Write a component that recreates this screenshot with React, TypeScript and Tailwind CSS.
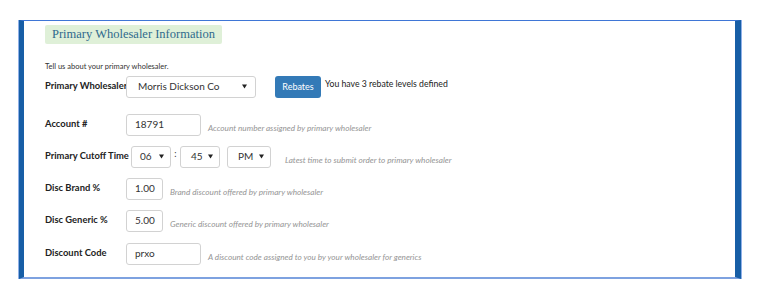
import React from "react";

const Caret = () => (
  <svg width="5" height="5" viewBox="0 0 5 5" className="shrink-0">
    <path d="M0 0.5 L5 0.5 L2.5 4.5 Z" fill="#222" />
  </svg>
);

function FakeSelect({ value, w, pl = "pl-[11px]", pr = "pr-[8px]" }: { value: string; w: string; pl?: string; pr?: string }) {
  return (
    <div className={`${w} shrink-0 h-[22px] flex items-center justify-between ${pl} ${pr} border border-[#d2d2d2] rounded-[3px] bg-white text-[10px] text-[#333]`}>
      <span>{value}</span>
      <Caret />
    </div>
  );
}

function Input({ value, w }: { value: string; w: string }) {
  return (
    <div className={`${w} shrink-0 h-[22px] flex items-center pl-[8px] border border-[#d2d2d2] rounded-[3px] bg-white text-[10px] text-[#333]`}>
      {value}
    </div>
  );
}

function Help({ children }: { children: React.ReactNode }) {
  return <span className="text-[8.2px] italic text-[#959595]">{children}</span>;
}

function Label({ children }: { children: React.ReactNode }) {
  return <span className="w-[81px] shrink-0 whitespace-nowrap font-bold text-[9.4px] text-[#222]">{children}</span>;
}

export default function App() {
  return (
    <div className="w-[760px] h-[300px] bg-white pt-[20px] pl-[19px]" style={{ fontFamily: "Lato, 'Liberation Sans', sans-serif" }}>
      <div className="w-[722px] h-[259px] border-t border-t-[#3f76d6] border-b-2 border-b-[#7ea2e0] border-l-[5px] border-l-[#175ea6] border-r-[6px] border-r-[#175ea6] pl-[21px] pt-[4px] shadow-[-1px_0_0_#8fb0e8,1px_0_0_#8fb0e8]">
        <div className="flex w-fit items-center h-[19px] px-[7px] bg-[#dff0d8] rounded-[2px] text-[12.5px] text-[#2f6a8d]" style={{ fontFamily: "'Liberation Serif', serif" }}>
          Primary Wholesaler Information
        </div>
        <div className="mt-[19px] text-[7.5px] text-[#333] leading-none">Tell us about your primary wholesaler.</div>
        <div className="mt-[5px] flex items-center h-[22px]">
          <Label>Primary Wholesaler</Label>
          <FakeSelect value="Morris Dickson Co" w="w-[130px]" />
          <button className="ml-[19px] w-[46px] h-[22px] bg-[#337ab7] rounded-[3px] text-white text-[9px]">Rebates</button>
          <span className="ml-[4px] text-[8.7px] text-[#222] -mt-[5px]">You have 3 rebate levels defined</span>
        </div>
        <div className="mt-[16px] flex items-center h-[22px]">
          <Label>Account #</Label>
          <Input value="18791" w="w-[75px]" />
          <span className="ml-[7px]"><Help>Account number assigned by primary wholesaler</Help></span>
        </div>
        <div className="mt-[10px] flex items-center h-[22px]">
          <span className="whitespace-nowrap font-bold text-[9.4px] text-[#222]">Primary Cutoff Time</span>
          <span className="ml-[2px]"><FakeSelect value="06" w="w-[40px]" pl="pl-[8px]" pr="pr-[6px]" /></span>
          <span className="w-[9px] text-center text-[9px] text-[#333] -mt-[6px]">:</span>
          <FakeSelect value="45" w="w-[40px]" pl="pl-[10px]" pr="pr-[6px]" />
          <span className="ml-[7px]"><FakeSelect value="PM" w="w-[44px]" pl="pl-[10px]" pr="pr-[6px]" /></span>
          <span className="ml-[14px]"><Help>Latest time to submit order to primary wholesaler</Help></span>
        </div>
        <div className="mt-[10px] flex items-center h-[22px]">
          <Label>Disc Brand %</Label>
          <Input value="1.00" w="w-[37px]" />
          <span className="ml-[7px]"><Help>Brand discount offered by primary wholesaler</Help></span>
        </div>
        <div className="mt-[10px] flex items-center h-[22px]">
          <Label>Disc Generic %</Label>
          <Input value="5.00" w="w-[37px]" />
          <span className="ml-[7px]"><Help>Generic discount offered by primary wholesaler</Help></span>
        </div>
        <div className="mt-[11px] flex items-center h-[22px]">
          <Label>Discount Code</Label>
          <Input value="prxo" w="w-[75px]" />
          <span className="ml-[7px]"><Help>A discount code assigned to you by your wholesaler for generics</Help></span>
        </div>
      </div>
    </div>
  );
}
